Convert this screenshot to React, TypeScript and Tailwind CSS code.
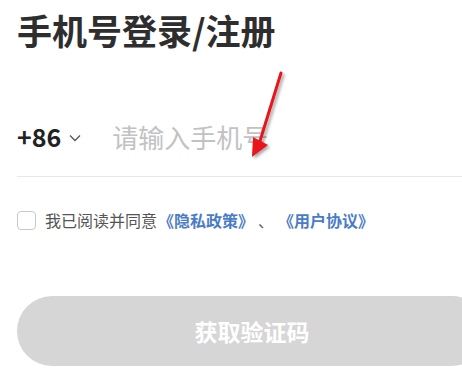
import { useState } from "react";

const font = { fontFamily: '"Noto Sans CJK SC", "Noto Sans", sans-serif' };

export default function App() {
  const [agree, setAgree] = useState(false);
  const [phone, setPhone] = useState("");

  return (
    <div className="relative w-[462px] h-[374px] overflow-hidden bg-white" style={font}>
      <div className="pl-[17px]">
        <h1 className="pt-[10px] text-[35px] leading-[40px] font-bold text-[#2e2e2e]">
          手机号登录/注册
        </h1>

        {/* 手机号输入 */}
        <div className="mt-[47px] h-[80px] flex items-center border-b border-[#e8e8e8]">
          <button className="flex items-center gap-[8px] text-[25px] font-bold text-[#222]">
            +86
            <svg width="12" height="8" viewBox="0 0 12 8" className="mt-[2px]">
              <path d="M1 1.5 L6 6.5 L11 1.5" fill="none" stroke="#555" strokeWidth="1.3" />
            </svg>
          </button>
          <input
            value={phone}
            onChange={(e) => setPhone(e.target.value)}
            placeholder="请输入手机号"
            className="ml-[31px] flex-1 bg-transparent outline-none text-[26px] text-[#222] placeholder:text-[#c2c2c2]"
          />
        </div>

        {/* 协议 */}
        <div className="mt-[30px] h-[26px] flex items-center text-[16px]">
          <button
            onClick={() => setAgree(!agree)}
            className={`w-[19px] h-[19px] rounded-[4px] border ${agree ? "bg-[#4a7cc4] border-[#4a7cc4]" : "border-[#c8c8c8]"}`}
          />
          <span className="ml-[9px] text-[#555]">我已阅读并同意</span>
          <a className="ml-[1px] text-[#4a7cc4] font-semibold">《隐私政策》</a>
          <span className="ml-[4px] text-[#666]">、</span>
          <a className="ml-[4px] text-[#4a7cc4] font-semibold">《用户协议》</a>
        </div>

        <button className="mt-[63px] w-[470px] h-[70px] rounded-full bg-[#d6d6d6] text-white text-[23px] font-bold">
          获取验证码
        </button>
      </div>

      {/* 标注箭头 */}
      <svg className="absolute left-0 top-0 pointer-events-none" width="462" height="374">
        <defs>
          <filter id="sh" x="-50%" y="-50%" width="200%" height="200%">
            <feDropShadow dx="2" dy="2" stdDeviation="1.5" floodColor="#000" floodOpacity="0.35" />
          </filter>
        </defs>
        <g filter="url(#sh)">
          <line x1="281" y1="73" x2="260" y2="141" stroke="#e8141b" strokeWidth="3" strokeLinecap="round" />
          <polygon points="252,157 253,137 268,145" fill="#e8141b" />
        </g>
      </svg>
    </div>
  );
}
